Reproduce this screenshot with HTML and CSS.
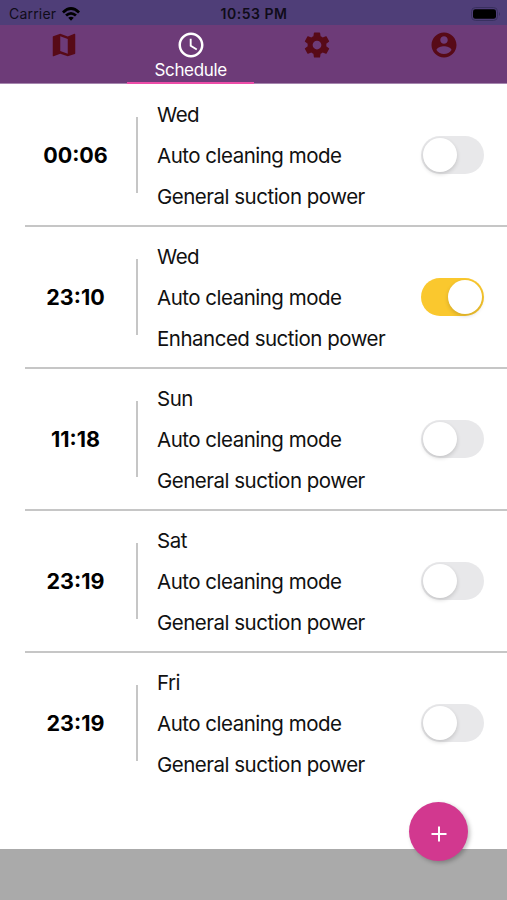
FILE: index.html
```html
<!DOCTYPE html>
<html lang="en">
<head>
<meta charset="utf-8">
<title>Schedule</title>
<link rel="stylesheet" href="styles.css">
</head>
<body>
<div class="app">
  <header class="status">
    <div class="carrier"><span>Carrier</span>
      <svg class="wifi" viewBox="0 0 18 14"><path d="M0 4.4Q9-4.2 18 4.4L16.1 6.4Q9-.2 1.9 6.4Z M3.1 7.6Q9 2.3 14.9 7.6L13 9.6Q9 6.1 5 9.6Z M6.2 10.8Q9 8.5 11.8 10.8L9 13.8Z"/></svg>
    </div>
    <div class="clock">10:53 PM</div>
    <div class="power"><svg class="battery" viewBox="0 0 30 14"><rect x=".5" y=".5" width="26" height="13" rx="4" fill="none" stroke="#39305f"/><rect x="2" y="2.2" width="23" height="9.600" rx="2.4"/><path d="M28 5q2 2 0 4z" fill="#39305f"/></svg></div>
  </header>
  <nav class="tabs">
    <a class="tab"><svg viewBox="0 0 24 24"><path d="M20.5 3l-.16.03L15 5.1 9 3 3.36 4.9c-.21.07-.36.25-.36.48V20.500c0 .28.22.5.5.5l.16-.03L9 18.900l6 2.100 5.640-1.900c.21-.07.36-.25.36-.48V3.500c0-.28-.22-.5-.5-.5zM15 19l-6-2.110V5l6 2.110V19z"/></svg></a>
    <a class="tab active"><svg viewBox="0 0 24 24"><path d="M11.990 2C6.470 2 2 6.480 2 12s4.470 10 9.990 10C17.520 22 22 17.520 22 12S17.520 2 11.990 2zM12 20c-4.420 0-8-3.580-8-8s3.580-8 8-8 8 3.580 8 8-3.580 8-8 8zm.5-13H11v6l5.250 3.150.75-1.230-4.500-2.670z"/></svg><span>Schedule</span></a>
    <a class="tab"><svg viewBox="0 0 24 24"><path d="M19.430 12.980c.04-.32.07-.64.07-.98s-.03-.66-.07-.98l2.110-1.650c.19-.15.24-.42.12-.64l-2-3.460c-.12-.22-.39-.3-.61-.22l-2.490 1c-.52-.4-1.080-.73-1.690-.98l-.38-2.650C14.460 2.180 14.250 2 14 2h-4c-.25 0-.46.18-.49.42l-.38 2.650c-.61.25-1.170.59-1.690.98l-2.490-1c-.23-.09-.49 0-.61.22l-2 3.460c-.13.22-.07.49.12.64l2.110 1.650c-.04.32-.07.65-.07.98s.03.66.07.98l-2.110 1.650c-.19.15-.24.42-.12.64l2 3.460c.12.22.39.3.61.22l2.490-1c.52.4 1.080.73 1.690.98l.38 2.650c.03.24.24.42.49.42h4c.25 0 .46-.18.49-.42l.38-2.650c.61-.25 1.170-.59 1.690-.98l2.490 1c.23.09.49 0 .61-.22l2-3.460c.12-.22.07-.49-.12-.64l-2.110-1.650zM12 15.500c-1.930 0-3.500-1.570-3.500-3.500s1.570-3.500 3.500-3.500 3.500 1.570 3.500 3.500-1.570 3.500-3.500 3.500z"/></svg></a>
    <a class="tab"><svg viewBox="0 0 24 24"><path d="M12 2C6.480 2 2 6.480 2 12s4.480 10 10 10 10-4.480 10-10S17.520 2 12 2zm0 3c1.660 0 3 1.340 3 3s-1.340 3-3 3-3-1.340-3-3 1.340-3 3-3zm0 14.200c-2.500 0-4.710-1.280-6-3.220.03-1.990 4-3.080 6-3.080 1.990 0 5.970 1.090 6 3.080-1.290 1.940-3.500 3.220-6 3.220z"/></svg></a>
  </nav>
  <main class="list">
    <section class="row"><div class="time">00:06</div><div class="info"><p>Wed</p><p>Auto cleaning mode</p><p>General suction power</p></div><div class="switch"></div></section>
    <section class="row"><div class="time">23:10</div><div class="info"><p>Wed</p><p>Auto cleaning mode</p><p>Enhanced suction power</p></div><div class="switch on"></div></section>
    <section class="row"><div class="time">11:18</div><div class="info"><p>Sun</p><p>Auto cleaning mode</p><p>General suction power</p></div><div class="switch"></div></section>
    <section class="row"><div class="time">23:19</div><div class="info"><p>Sat</p><p>Auto cleaning mode</p><p>General suction power</p></div><div class="switch"></div></section>
    <section class="row"><div class="time">23:19</div><div class="info"><p>Fri</p><p>Auto cleaning mode</p><p>General suction power</p></div><div class="switch"></div></section>
  </main>
  <footer class="bottom"></footer>
  <div class="fab"><svg viewBox="0 0 16 16"><path d="M8 .5v15M.5 8h15"/></svg></div>
</div>
</body>
</html>
```
FILE: styles.css
```css
* { box-sizing: border-box; }
body { margin: 0; font-family: Inter, sans-serif; color: #111; background: #fff; }
p { margin: 0; }
svg { display: block; }
.app { position: relative; width: 507px; height: 900px; display: flex; flex-direction: column; overflow: hidden; }
.status { height: 25px; flex: none; background: #4f3e78; display: grid; grid-template-columns: 1fr auto 1fr; align-items: center; padding: 2px 6px 0 7px; font-size: 14px; color: #100c19; }
.carrier { display: flex; align-items: center; gap: 6px; letter-spacing: .2px; padding-left: 2px; }
.wifi { width: 18px; height: 14px; }
.clock { font-weight: 600; font-size: 14px; letter-spacing: .5px; }
.power { display: flex; justify-content: flex-end; }
.battery { width: 30px; height: 14px; }
.tabs { height: 59px; flex: none; display: grid; grid-template-columns: repeat(4, 1fr); background: #6d3b78; border-bottom: 1px solid #a586ae; }
.tab { display: flex; flex-direction: column; align-items: center; padding-top: 5px; color: #fff; font-size: 17px; line-height: 20px; letter-spacing: -.35px; }
.tab svg { width: 30px; height: 30px; fill: #570a17; }
.tab:first-child { padding-left: 2px; }
.tab.active svg { fill: #fff; }
.tab.active { padding-left: 1px; border-bottom: 2px solid #ed4da8; margin-bottom: -1px; }
.list { flex: 1; padding-top: 1px; }
.row { height: 142px; margin-left: 25px; display: flex; align-items: center; border-bottom: 2px solid #c6c6c6; padding-right: 23px; }
.row:last-child { border-bottom-color: transparent; }
.time { width: 113px; height: 76px; flex: none; display: flex; align-items: center; justify-content: center; padding-right: 10px; border-right: 2px solid #c6c6c6; font-size: 21.5px; font-weight: 700; color: #000; }
.info { flex: 1; padding: 1.4px 0 0 19px; font-size: 20.5px; letter-spacing: -.5px; line-height: 41.4px; white-space: nowrap; }
.switch { width: 63px; height: 38px; border-radius: 19px; background: #e8e8ea; padding: 2px; display: flex; }
.switch::before { content: ""; width: 34px; height: 34px; border-radius: 50%; background: #fff; box-shadow: 0 2px 4px rgba(0,0,0,.16); }
.on { background: #fac82e; justify-content: flex-end; }
.bottom { height: 51px; flex: none; background: #aaa; }
.fab { position: absolute; left: 409px; top: 802px; width: 59px; height: 59px; border-radius: 50%; background: #d2388f; box-shadow: 2px 2px 4px rgba(0,0,0,.25); display: flex; align-items: center; justify-content: center; padding-top: 5px; }
.fab svg { width: 16px; height: 16px; fill: none; stroke: #fff; stroke-width: 2; }
```
